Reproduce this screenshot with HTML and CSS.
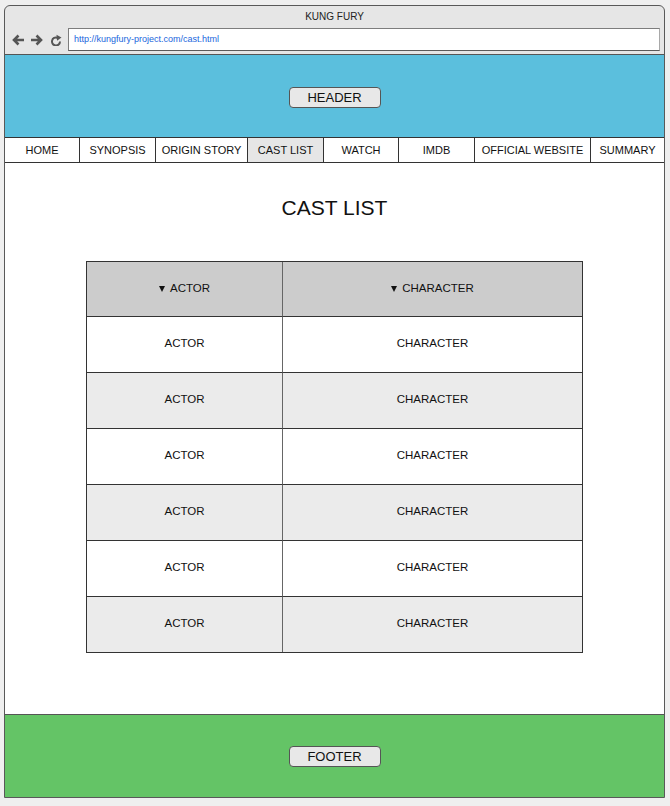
FILE: index.html
```html
<!DOCTYPE html>
<html lang="en">
<head>
<meta charset="utf-8">
<title>Kung Fury - Cast List</title>
<link rel="stylesheet" href="styles.css">
</head>
<body>
<div class="window">
  <div class="titlebar">KUNG FURY</div>
  <div class="addressrow">
    <svg class="ico ico-back" width="14" height="12" viewBox="0 0 14 12"><path d="M13 6H3 M7.5 1.5L3 6L7.5 10.5" fill="none" stroke="#555" stroke-width="2.6"/></svg>
    <svg class="ico ico-fwd" width="14" height="12" viewBox="0 0 14 12"><path d="M1 6H11 M6.5 1.5L11 6L6.5 10.5" fill="none" stroke="#555" stroke-width="2.6"/></svg>
    <svg class="ico ico-reload" width="13" height="12" viewBox="0 0 13 12"><path d="M10 7.5A4 4 0 1 1 7.3 3.7" fill="none" stroke="#555" stroke-width="2"/><path d="M6.5 0.8L11.5 3.6L7 6.8Z" fill="#555"/></svg>
    <div class="urlbar">http://kungfury-project.com/cast.html</div>
  </div>
  <header class="site-header">
    <div class="btn">HEADER</div>
  </header>
  <nav class="nav">
    <div class="nav-item">HOME</div>
    <div class="nav-item">SYNOPSIS</div>
    <div class="nav-item">ORIGIN STORY</div>
    <div class="nav-item active">CAST LIST</div>
    <div class="nav-item">WATCH</div>
    <div class="nav-item">IMDB</div>
    <div class="nav-item">OFFICIAL WEBSITE</div>
    <div class="nav-item last">SUMMARY</div>
  </nav>
  <main class="main">
    <h1 class="title">CAST LIST</h1>
    <div class="table">
      <div class="cell head c1"><span class="tri"></span>ACTOR</div>
      <div class="cell head c2"><span class="tri"></span>CHARACTER</div>
      <div class="cell c1">ACTOR</div><div class="cell c2">CHARACTER</div>
      <div class="cell c1 alt">ACTOR</div><div class="cell c2 alt">CHARACTER</div>
      <div class="cell c1">ACTOR</div><div class="cell c2">CHARACTER</div>
      <div class="cell c1 alt">ACTOR</div><div class="cell c2 alt">CHARACTER</div>
      <div class="cell c1">ACTOR</div><div class="cell c2">CHARACTER</div>
      <div class="cell c1 alt lastrow">ACTOR</div><div class="cell c2 alt lastrow">CHARACTER</div>
    </div>
  </main>
  <footer class="site-footer">
    <div class="btn">FOOTER</div>
  </footer>
</div>
</body>
</html>
```
FILE: styles.css
```css
* { box-sizing: border-box; }
html, body { margin: 0; padding: 0; }
body {
  background: #efefef;
  font-family: "Liberation Sans", Arial, sans-serif;
  color: #111;
  padding: 5px 0 0 4px;
}
.window {
  width: 661px;
  height: 793px;
  border: 1px solid #595959;
  border-radius: 6px 6px 0 0;
  background: #e6e6e6;
  display: flex;
  flex-direction: column;
  overflow: hidden;
}
.titlebar {
  height: 20px;
  padding-top: 1px;
  line-height: 19px;
  text-align: center;
  font-size: 10px;
  color: #222;
}
.addressrow {
  height: 28px;
  display: flex;
  align-items: flex-start;
  padding: 2px 4px 0 6px;
}
.ico { display: block; flex: none; margin-top: 6px; }
.ico-back { margin-right: 5px; }
.ico-fwd { margin-right: 6px; }
.ico-reload { margin-right: 5px; }
.urlbar {
  flex: 1;
  height: 23px;
  background: #fff;
  border: 1px solid #7d7d7d;
  border-right-color: #a8a8a8;
  border-bottom-color: #5a5a5a;
  font-size: 9px;
  line-height: 21px;
  padding-left: 5px;
  color: #1a66dd;
}
.site-header {
  height: 83px;
  border-top: 1px solid #555;
  background: #5bbfdd;
  display: flex;
  justify-content: center;
  padding-top: 32px;
}
.btn {
  width: 92px;
  height: 21px;
  background: #e8e8e8;
  border: 1px solid #555;
  border-radius: 4px;
  font-size: 13px;
  line-height: 19px;
  text-align: center;
  color: #111;
}
.nav {
  display: grid;
  grid-template-columns: 75px 76px 92px 76px 75px 76px 116px 1fr;
  height: 26px;
  border-top: 1px solid #333;
  border-bottom: 1px solid #333;
  background: #fff;
}
.nav-item {
  border-right: 1px solid #333;
  font-size: 11px;
  line-height: 24px;
  text-align: center;
  white-space: nowrap;
  color: #111;
}
.nav-item.last { border-right: none; }
.nav-item.active { background: #e6e6e6; }
.main {
  height: 551px;
  background: #fff;
  padding-top: 33px;
  display: flex;
  flex-direction: column;
  align-items: center;
}
.title {
  margin: 0;
  font-size: 21px;
  line-height: 24px;
  font-weight: normal;
  color: #111;
}
.table {
  margin-top: 41px;
  width: 497px;
  border: 1px solid #333;
  display: grid;
  grid-template-columns: 196px 1fr;
  grid-template-rows: 55px repeat(5, 56px) 55px;
}
.cell {
  display: flex;
  align-items: center;
  justify-content: center;
  padding-bottom: 3px;
  font-size: 11.5px;
  color: #111;
  background: #fff;
  border-bottom: 1px solid #333;
}
.cell.c1 { border-right: 1px solid #666; }
.cell.head { background: #cccccc; }
.cell.alt { background: #ebebeb; }
.cell.lastrow { border-bottom: none; }
.tri {
  display: inline-block;
  width: 0;
  height: 0;
  border-left: 3px solid transparent;
  border-right: 3px solid transparent;
  border-top: 6px solid #111;
  margin-right: 5px;
  margin-top: 2px;
}
.site-footer {
  flex: 1;
  border-top: 1px solid #555;
  background: #64c466;
  display: flex;
  justify-content: center;
  padding-top: 31px;
}
```
